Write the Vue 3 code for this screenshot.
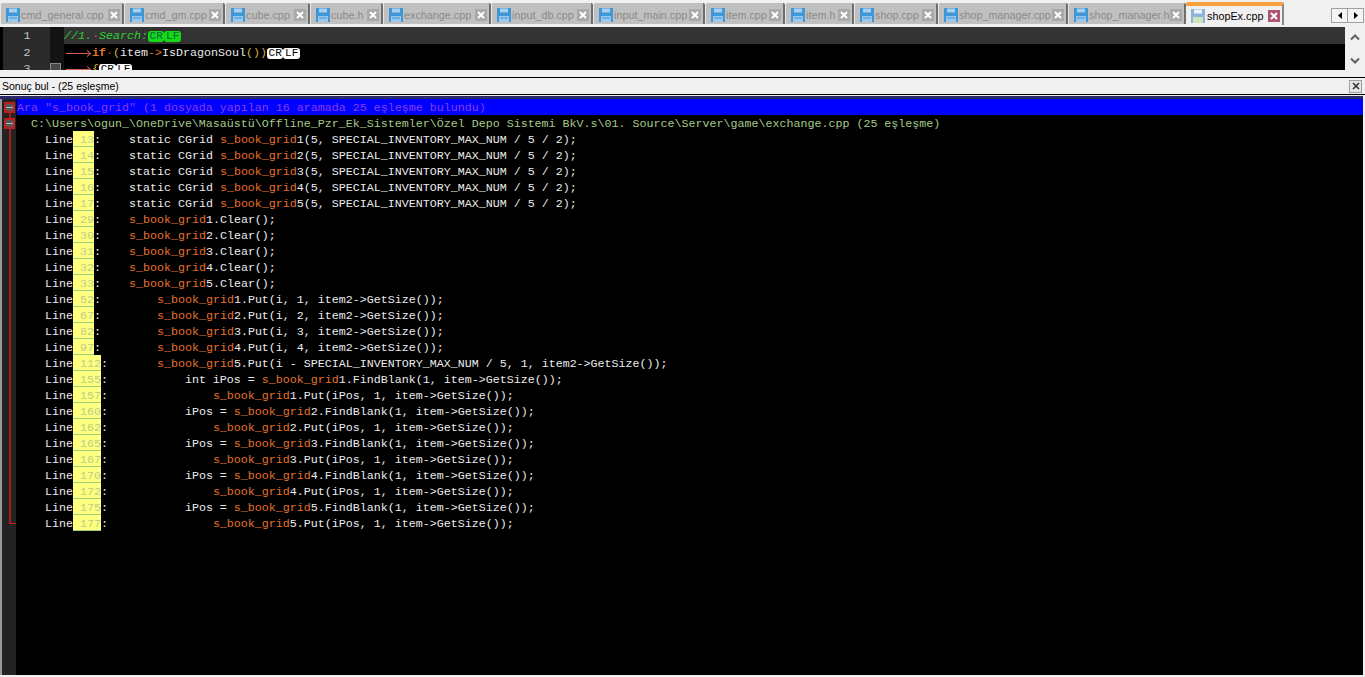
<script setup>
const tabs = [
  { name: 'cmd_general.cpp', w: 124 },
  { name: 'cmd_gm.cpp', w: 101 },
  { name: 'cube.cpp', w: 85 },
  { name: 'cube.h', w: 73 },
  { name: 'exchange.cpp', w: 108 },
  { name: 'input_db.cpp', w: 102 },
  { name: 'input_main.cpp', w: 112 },
  { name: 'item.cpp', w: 80 },
  { name: 'item.h', w: 69 },
  { name: 'shop.cpp', w: 84 },
  { name: 'shop_manager.cpp', w: 130 },
  { name: 'shop_manager.h', w: 118 },
]
const S = 's_book_grid'
const nums = [13,14,15,16,17,29,30,31,32,33,52,67,82,97,112,155,157,160,162,165,167,170,172,175,177]
const code = [
  ['static CGrid ', '1(5, SPECIAL_INVENTORY_MAX_NUM / 5 / 2);'],
  ['static CGrid ', '2(5, SPECIAL_INVENTORY_MAX_NUM / 5 / 2);'],
  ['static CGrid ', '3(5, SPECIAL_INVENTORY_MAX_NUM / 5 / 2);'],
  ['static CGrid ', '4(5, SPECIAL_INVENTORY_MAX_NUM / 5 / 2);'],
  ['static CGrid ', '5(5, SPECIAL_INVENTORY_MAX_NUM / 5 / 2);'],
  ['', '1.Clear();'], ['', '2.Clear();'], ['', '3.Clear();'], ['', '4.Clear();'], ['', '5.Clear();'],
  ['    ', '1.Put(i, 1, item2->GetSize());'],
  ['    ', '2.Put(i, 2, item2->GetSize());'],
  ['    ', '3.Put(i, 3, item2->GetSize());'],
  ['    ', '4.Put(i, 4, item2->GetSize());'],
  ['    ', '5.Put(i - SPECIAL_INVENTORY_MAX_NUM / 5, 1, item2->GetSize());'],
  ['        int iPos = ', '1.FindBlank(1, item->GetSize());'],
  ['            ', '1.Put(iPos, 1, item->GetSize());'],
  ['        iPos = ', '2.FindBlank(1, item->GetSize());'],
  ['            ', '2.Put(iPos, 1, item->GetSize());'],
  ['        iPos = ', '3.FindBlank(1, item->GetSize());'],
  ['            ', '3.Put(iPos, 1, item->GetSize());'],
  ['        iPos = ', '4.FindBlank(1, item->GetSize());'],
  ['            ', '4.Put(iPos, 1, item->GetSize());'],
  ['        iPos = ', '5.FindBlank(1, item->GetSize());'],
  ['            ', '5.Put(iPos, 1, item->GetSize());'],
]
const rows = nums.map((n, i) => ({
  num: ' ' + n,
  before: (n >= 100 ? '   ' : '    ') + code[i][0],
  after: code[i][1],
}))
const lead = '    Line'
const pathText = '  C:\\Users\\ogun_\\OneDrive\\Masaüstü\\Offline_Pzr_Ek_Sistemler\\Özel Depo Sistemi BkV.s\\01. Source\\Server\\game\\exchange.cpp (25 eşleşme)'
</script>

<template>
  <div class="app">
    <div class="tabbar">
      <div v-for="t in tabs" :key="t.name" class="tab" :style="{ width: t.w + 'px' }">
        <svg class="disk" width="14" height="14" viewBox="0 0 14 14">
          <rect width="14" height="14" fill="#3f97d8" />
          <rect x="3" y="0.5" width="8" height="4" fill="#a9cfee" />
          <rect x="2" y="8" width="10" height="6" fill="#9cc7e8" />
          <rect x="3" y="9.5" width="8" height="1" fill="#3f97d8" />
        </svg>
        <span class="tab-name">{{ t.name }}</span>
        <span class="x">
          <svg width="12" height="12" viewBox="0 0 12 12"><path d="M3 3l6 6M9 3l-6 6" stroke="#fff" stroke-width="2" /></svg>
        </span>
      </div>
      <div class="tab active">
        <svg class="disk" width="14" height="14" viewBox="0 0 14 14">
          <rect width="14" height="14" fill="#8db4dc" />
          <rect x="3" y="0.5" width="8" height="4" fill="#eef4fa" />
          <rect x="2" y="8" width="10" height="6" fill="#cfe3b8" />
        </svg>
        <span class="tab-name">shopEx.cpp</span>
        <span class="x">
          <svg width="12" height="12" viewBox="0 0 12 12"><path d="M3 3l6 6M9 3l-6 6" stroke="#fff" stroke-width="2" /></svg>
        </span>
      </div>
      <div class="spin">
        <span class="spin-btn"><svg width="4" height="7" viewBox="0 0 4 7"><path d="M4 0v7L0 3.5z" fill="#000" /></svg></span>
        <span class="spin-btn"><svg width="4" height="7" viewBox="0 0 4 7"><path d="M0 0v7l4-3.5z" fill="#000" /></svg></span>
      </div>
    </div>

    <div class="editor">
      <div class="numbers">
        <div class="num first">1</div>
        <div class="num">2</div>
        <div class="num">3</div>
      </div>
      <div class="folds">
        <span class="fold-box"></span>
      </div>
      <div class="code">
        <div class="code-line first current"><span class="comment">//1.<span class="dot">·</span>Search:</span><span class="eol g">CR</span><span class="eol g">LF</span></div>
        <div class="code-line"><span class="arrow"></span><span class="kw">if</span><span class="dot2">·</span><span class="par">(</span>item<span class="op">-&gt;</span>IsDragonSoul<span class="par">())</span><span class="eol">CR</span><span class="eol">LF</span></div>
        <div class="code-line"><span class="arrow"></span><span class="par">{</span><span class="eol">CR</span><span class="eol">LF</span></div>
      </div>
      <div class="vscroll">
        <svg width="12" height="8" viewBox="0 0 12 8"><path d="M2 6.5l4-4 4 4" fill="none" stroke="#606060" stroke-width="2" /></svg>
        <svg width="12" height="8" viewBox="0 0 12 8"><path d="M2 1.5l4 4 4-4" fill="none" stroke="#606060" stroke-width="2" /></svg>
      </div>
    </div>

    <div class="panel-head">
      <span>Sonuç bul - (25 eşleşme)</span>
      <span class="panel-close">
        <svg width="8" height="8" viewBox="0 0 8 8"><path d="M1 1l6 6M7 1L1 7" stroke="#333" stroke-width="1.6" /></svg>
      </span>
    </div>

    <div class="results">
      <div class="gutter">
        <span class="rline"></span>
        <span class="rbox first"><i></i></span>
        <span class="rbox second"><i></i></span>
      </div>
      <div class="list">
        <div class="row head">Ara "s_book_grid" (1 dosyada yapılan 16 aramada 25 eşleşme bulundu)</div>
        <div class="row path">{{ pathText }}</div>
        <div v-for="r in rows" :key="r.num" class="row">{{ lead }}<span class="hit">{{ r.num }}</span>:{{ r.before }}<span class="term">{{ S }}</span>{{ r.after }}</div>
      </div>
    </div>
  </div>
</template>

<style>
html, body { margin: 0; background: #f0f0f0; overflow: hidden; }
</style>

<style scoped>
.app { width: 1365px; height: 677px; display: flex; flex-direction: column; overflow: hidden; background: #f0f0f0; }

.tabbar { height: 27px; flex: none; display: flex; align-items: flex-start; background: #f0f0f0; font-family: "Liberation Sans", sans-serif; position: relative; box-sizing: border-box; padding-top: 3px; }
.tab { height: 21px; box-sizing: border-box; flex: none; display: flex; align-items: center; padding: 2px 2px 0 5px; background: #c0c0c0; border-right: 2px solid #6e6e6e; border-left: 1px solid #e6e6e6; color: #8a8a8a; font-size: 10.8px; border-radius: 2px 2px 0 0; }
.tab-name { flex: 1; margin-left: 1px; white-space: nowrap; }
.disk { flex: none; }
.x { width: 12px; height: 12px; flex: none; background: #a9a9a9; display: block; }
.x svg { display: block; }
.tab.active { width: 98px; height: 23px; margin-top: -1px; padding: 0 2px 0 5px; background: #f0f0f0; color: #000; border-top: 4px solid #f6a040; border-left: 0; border-right: 2px solid #8a8a8a; }
.tab.active .tab-name { margin-left: 2px; }
.tab.active .x { background: #ad5470; }
.spin { position: absolute; right: 1px; top: 8px; display: flex; }
.spin-btn { width: 15px; height: 13px; border: 1px solid #a0a0a0; background: #f4f4f4; display: flex; align-items: center; justify-content: center; margin-left: -1px; }

.editor { height: 43px; flex: none; display: flex; padding-left: 3px; overflow: hidden; font-family: "Liberation Mono", monospace; font-size: 11.67px; background: #000; }
.numbers { width: 47px; flex: none; background: #2a2a2a; color: #c4c4c4; padding-left: 1px; box-sizing: border-box; }
.num { height: 16px; line-height: 18px; text-align: center; }
.num.first { height: 17px; line-height: 19px; }
.folds { width: 14px; flex: none; background: #141414; padding-top: 36px; box-sizing: border-box; }
.fold-box { display: block; width: 11px; height: 11px; margin-left: 0; background: #4a4a4a; border: 1px solid #888; box-sizing: border-box; }
.code { flex: 1; min-width: 0; color: #eaeaea; }
.code-line { height: 16px; line-height: 18px; white-space: pre; }
.code-line.first { height: 17px; line-height: 19px; }
.code-line.current { background: #333; }
.comment { color: #2fcf2f; font-style: italic; }
.dot { color: #e05040; font-style: normal; }
.dot2 { color: #c05030; }
.kw { color: #e0782e; font-weight: bold; }
.par { color: #d6b440; }
.op { color: #e0782e; }
.arrow { display: inline-block; width: 28px; height: 16px; vertical-align: top; background: linear-gradient(#d05a50, #d05a50) no-repeat 2px 9px / 24px 1px; position: relative; }
.arrow::after { content: ""; position: absolute; right: 2px; top: 7px; width: 4px; height: 4px; border-top: 1px solid #d05a50; border-right: 1px solid #d05a50; transform: rotate(45deg); }
.eol { display: inline-block; height: 11px; line-height: 11px; width: 16.5px; text-align: center; background: #fff; color: #000; border-radius: 3px; vertical-align: 0; font-size: 11px; }
.eol.g { background: #16d916; color: #064; }
.vscroll { width: 20px; flex: none; background: #f0f0f0; display: flex; flex-direction: column; align-items: center; justify-content: space-between; padding: 6px 0 5px; box-sizing: border-box; }

.panel-head { margin-top: 7px; height: 18px; flex: none; box-sizing: border-box; border-top: 1px solid #000; border-bottom: 1px solid #000; display: flex; align-items: center; justify-content: space-between; padding: 0 3px 0 2px; font-family: "Liberation Sans", sans-serif; font-size: 10.5px; color: #000; }
.panel-close { width: 11px; height: 11px; border: 1px solid #a0a0a0; background: #e6e6e6; display: flex; align-items: center; justify-content: center; }

.results { flex: 1; min-height: 0; display: flex; background: #000; margin: 1px 2px 2px 0; border-top: 3px solid #2a2a6a; position: relative; font-family: "Liberation Mono", monospace; font-size: 11.67px; }
.gutter { width: 17px; flex: none; background: linear-gradient(90deg, #9a9a9a 0 2px, #232323 2px 16px, #000 16px); position: relative; }
.rbox { position: absolute; left: 4px; width: 11px; height: 11px; box-sizing: border-box; border: 2px solid #b82020; background: #555; }
.rbox i { position: absolute; left: 0; right: 0; top: 2.5px; height: 1px; background: #bbb; }
.rbox.first { top: 3px; }
.rbox.second { top: 19px; }
.rline { position: absolute; left: 9px; top: 14px; width: 7px; height: 411px; border-left: 2px solid #a81c1c; border-bottom: 1px solid #d01c1c; box-sizing: border-box; }
.list { flex: 1; min-width: 0; }
.row { height: 16px; line-height: 18px; white-space: pre; color: #ececec; }
.row.head { background: #0000ff; color: #8a3cf0; }
.row.path { color: #a6c98a; }
.hit { background: #ffff80; color: #bccc84; display: inline-block; height: 16px; vertical-align: top; box-shadow: inset 0 -1px 0 #9fd080; }
.term { color: #e4722c; }
</style>
